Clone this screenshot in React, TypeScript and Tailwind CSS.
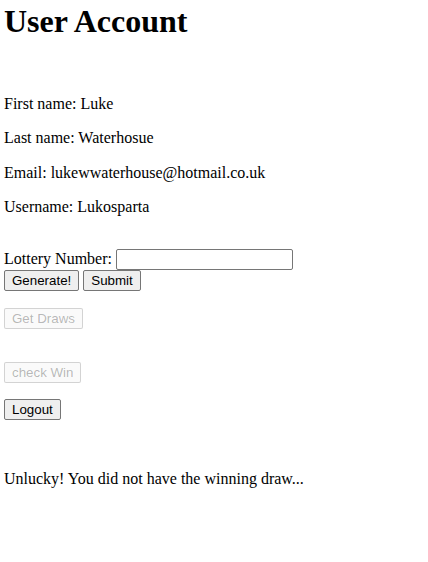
const btn =
  "h-[21px] px-[7px] border border-[#767676] rounded-[2px] bg-[#efefef] text-black text-[13.333px] leading-[15px] font-['Liberation_Sans',Arial,sans-serif]";
const btnOff =
  "h-[21px] px-[7px] border border-[#767676]/30 rounded-[2px] bg-[#efefef]/30 text-[#101010]/30 text-[13.333px] leading-[15px] font-['Liberation_Sans',Arial,sans-serif]";

export default function App() {
  return (
    <div className="min-h-[562px] w-[428px] bg-white pl-[4px] text-black font-['Liberation_Serif','Times_New_Roman',serif] text-[16px]">
      <h1 className="mt-[3px] text-[32px] leading-[37px] font-bold">User Account</h1>

      <p className="mt-[55px] leading-[18.4px]">First name: Luke</p>
      <p className="mt-[16px] leading-[18.4px]">Last name: Waterhosue</p>
      <p className="mt-[16px] leading-[18.4px]">Email: lukewwaterhouse@hotmail.co.uk</p>
      <p className="mt-[16px] leading-[18.4px]">Username: Lukosparta</p>

      <form className="mt-[32.5px]" onSubmit={(e) => e.preventDefault()}>
        <div className="flex items-center h-[21px]">
          <span className="leading-[18.4px]">Lottery Number:&nbsp;</span>
          <input
            type="text"
            className="h-[21px] w-[177px] border border-[#767676] rounded-[2px] px-[2px] text-[13.333px] font-['Liberation_Sans',Arial,sans-serif] outline-none"
          />
        </div>
        <div className="flex gap-[4px]">
          <button type="button" className={btn}>Generate!</button>
          <button type="submit" className={btn}>Submit</button>
        </div>
      </form>

      <div className="mt-[17px] flex">
        <button type="button" disabled className={btnOff}>Get Draws</button>
      </div>

      <div className="mt-[33px] flex">
        <button type="button" disabled className={btnOff}>check Win</button>
      </div>

      <div className="mt-[16px] flex">
        <button type="button" className={btn}>Logout</button>
      </div>

      <p className="mt-[49.4px] leading-[18.4px]">Unlucky! You did not have the winning draw...</p>
    </div>
  );
}
